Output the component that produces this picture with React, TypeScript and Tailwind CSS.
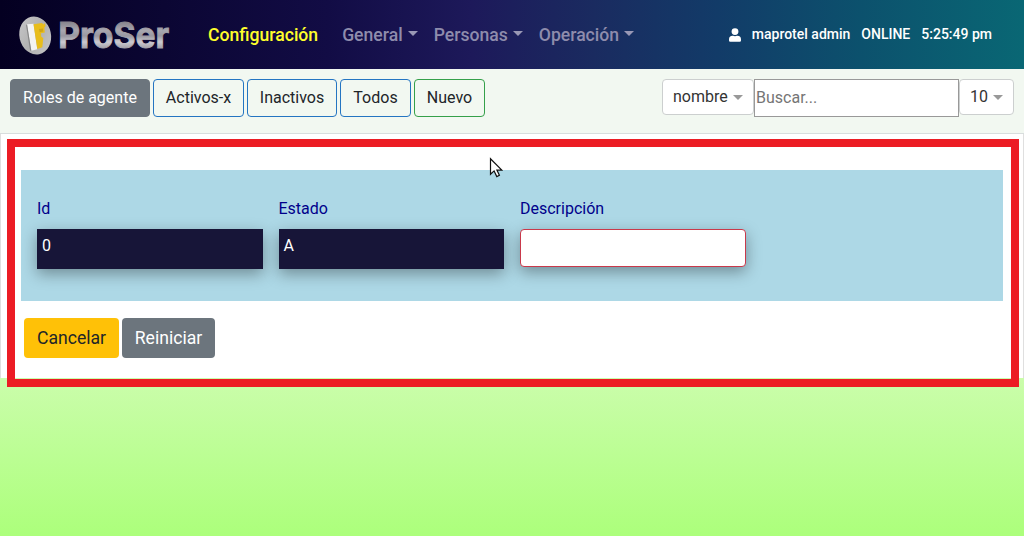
import React from 'react';

function Caret({ className }: { className: string }) {
  return <span className={`inline-block h-0 w-0 border-x-[5px] border-t-[5px] border-x-transparent ${className}`} />;
}

function Logo() {
  return (
    <svg width="170" height="64" viewBox="0 -8 170 64" className="block overflow-visible">
      <defs>
        <linearGradient id="silver" x1="0" y1="0" x2="0" y2="1">
          <stop offset="0.2" stopColor="#85838c" />
          <stop offset="0.4" stopColor="#a9a7af" />
          <stop offset="0.52" stopColor="#9a98a1" />
          <stop offset="0.66" stopColor="#cccad0" />
          <stop offset="0.8" stopColor="#a3a1a9" />
        </linearGradient>
        <linearGradient id="disc" x1="0" y1="0" x2="1" y2="1">
          <stop offset="0" stopColor="#c9c9cb" />
          <stop offset="0.5" stopColor="#b0b0b0" />
          <stop offset="1" stopColor="#c8c8c8" />
        </linearGradient>
      </defs>
      <ellipse cx="20.2" cy="24.5" rx="15.8" ry="19.2" transform="rotate(-12 20.2 24.5)" fill="url(#disc)" />
      <path d="M12 13.2 18.5 12.7l3.8 25.6-6 1.5Z" fill="#f3f3f3" />
      <path d="m12 13.2-.9 1 4 25.5 1.2.1Z" fill="#858585" />
      <path d="M18.5 13.2 27 12l1.5 1.5L30 12l.5 3.2-1.2 1.3.5 5-3.8.8.3 3.5 2 1.2-1 9.3-5 1.8Z" fill="#e8bd1c" />
      <path d="m24 18 4-.5.2 3-3.5.8Z" fill="#cfa519" />
      <text
        x="43.2" y="37" textLength="111" lengthAdjust="spacingAndGlyphs"
        fill="url(#silver)" stroke="url(#silver)" strokeWidth="0.9"
        className="font-['Inter',sans-serif] text-[36px] font-bold"
      >
        ProSer
      </text>
    </svg>
  );
}

const menus = [
  { label: 'General', gap: 'ml-[24px]' },
  { label: 'Personas', gap: 'ml-[16px]' },
  { label: 'Operación', gap: 'ml-[16px]' },
];

function Header() {
  return (
    <header className="flex h-[69px] items-center bg-[linear-gradient(90deg,#040021_0%,#120c45_32%,#1d195a_46%,#1a2b60_58%,#123b68_70%,#0c516d_84%,#096774_100%)] pl-[15px] pr-8">
      <div className="w-[193px]"><Logo /></div>
      <nav className="flex items-center pt-[2px] text-[17.6px] font-medium text-[#8e8cac]">
        <span className="text-[#ffff2b]">Configuración</span>
        {menus.map((m) => (
          <span key={m.label} className={`flex items-center gap-[5px] ${m.gap}`}>
            {m.label}
            <Caret className="mb-[4px] border-t-[#9998b5]" />
          </span>
        ))}
      </nav>
      <div className="ml-auto flex items-center text-[14px] font-medium text-white">
        <svg width="12" height="14" viewBox="0 0 448 512" fill="currentColor" className="mr-[11px]">
          <path d="M224 256a128 128 0 1 0 0-256 128 128 0 0 0 0 256Zm90 32h-17a174 174 0 0 1-146 0h-17A134 134 0 0 0 0 422v42a48 48 0 0 0 48 48h352a48 48 0 0 0 48-48v-42a134 134 0 0 0-134-134Z" />
        </svg>
        <span>maprotel admin</span>
        <span className="ml-[11px]">ONLINE</span>
        <span className="ml-[11px]">5:25:49 pm</span>
      </div>
    </header>
  );
}

const filters = [
  { label: 'Roles de agente', style: 'w-[140px] border-[#6c757d] bg-[#6c757d] text-white' },
  { label: 'Activos-x', style: 'w-[91px] border-[#2475c2]' },
  { label: 'Inactivos', style: 'w-[90px] border-[#2475c2]' },
  { label: 'Todos', style: 'w-[71px] border-[#2475c2]' },
  { label: 'Nuevo', style: 'w-[71px] border-[#35a04a]' },
];

function Toolbar() {
  return (
    <div className="flex h-[65px] items-start border-b border-[#d8dddd] bg-[#f2f8f1] pl-[10px] pr-[10px] pt-[10px]">
      <div className="flex gap-[3px]">
        {filters.map((f) => (
          <button key={f.label} className={`h-[38px] rounded border text-center text-[16px] leading-none ${f.style}`}>
            {f.label}
          </button>
        ))}
      </div>
      <div className="ml-auto flex items-start">
        <button className="flex h-[36px] w-[92px] items-center gap-[5px] rounded border border-[#cccfcf] bg-white pl-[10px] text-[#333]">
          nombre<Caret className="mt-[1px] border-t-[#999]" />
        </button>
        <input placeholder="Buscar..." className="h-[38px] w-[205px] border border-[#999] bg-white pb-[2px] pl-[1px] outline-none placeholder:text-[#757575]" />
        <button className="flex h-[36px] w-[55px] items-center gap-[5px] rounded border border-[#cccfcf] bg-white pl-[10px] text-[#333]">
          10<Caret className="mt-[1px] border-t-[#999]" />
        </button>
      </div>
    </div>
  );
}

function Field({ label, value }: { label: string; value?: string }) {
  return (
    <label className="block w-[225.5px] text-[#00008b]">
      <span className="mb-[8px] block leading-6">{label}</span>
      {value ? (
        <span className="block h-[40px] bg-[#171538] px-[5px] pt-[5px] leading-6 text-white shadow-[0_5px_15px_rgba(0,0,0,0.35)]">{value}</span>
      ) : (
        <span className="block h-[38px] rounded border border-[#c9394b] bg-white shadow-[0_5px_15px_rgba(0,0,0,0.35)]" />
      )}
    </label>
  );
}

function MousePointer() {
  return (
    <svg width="14" height="22" viewBox="0 0 14 22" className="absolute left-[489px] top-[157px]">
      <path d="M1.5 1.8v15.5l3.6-3.4 2.7 5.7 2.6-1.3-2.5-5.2h4.9Z" fill="white" stroke="#111" strokeWidth="1.2" />
    </svg>
  );
}

export default function App() {
  return (
    <div className="relative h-[536px] w-[1024px] overflow-hidden bg-[linear-gradient(180deg,#f4fff0_0%,#cbfdac_70%,#acff7b_100%)] font-['Roboto',sans-serif] text-[16px] text-[#212529]">
      <Header />
      <Toolbar />
      <main className="h-[244px] border-x border-[#dfdfdf] bg-white pl-[20px] pr-[20px] pt-[36px]">
        <div className="flex h-[131px] gap-[16px] bg-[#add8e6] pl-[16px] pt-[27px]">
          <Field label="Id" value="0" />
          <Field label="Estado" value="A" />
          <Field label="Descripción" />
        </div>
        <div className="ml-[3px] mt-[17px] flex gap-[3px] text-[17.6px] leading-none">
          <button className="h-[40px] w-[95px] rounded bg-[#ffc107] pt-[2px]">Cancelar</button>
          <button className="h-[40px] w-[93px] rounded bg-[#6c757d] pt-[2px] text-white">Reiniciar</button>
        </div>
      </main>
      <div className="absolute left-[7px] top-[139px] h-[248px] w-[1012px] border-[8px] border-[#ec1c24]" />
      <MousePointer />
    </div>
  );
}
